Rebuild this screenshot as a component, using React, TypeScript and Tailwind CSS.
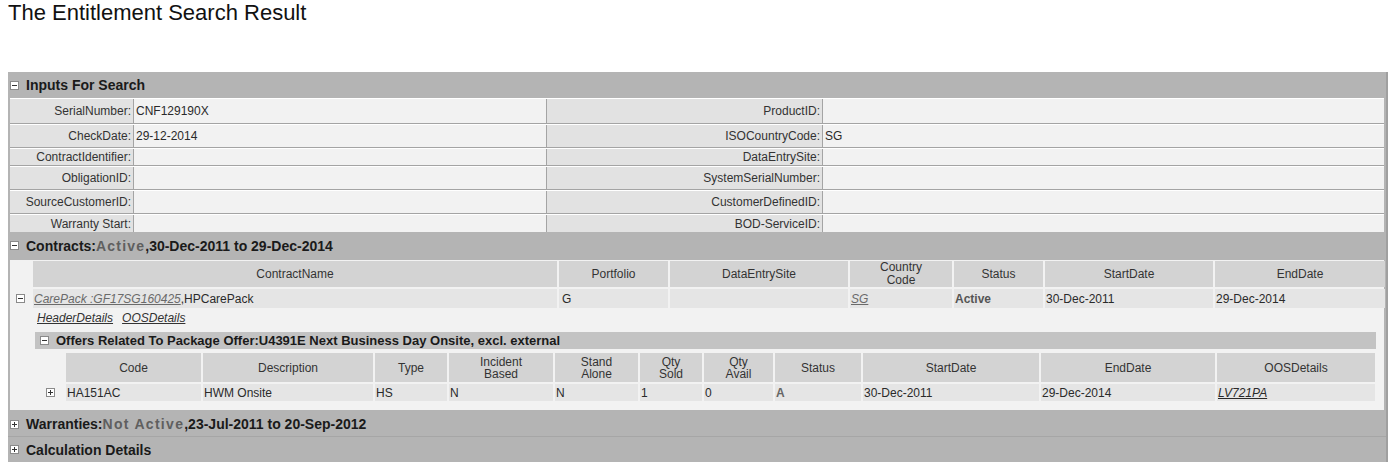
import clsx from "clsx";

const BoxIcon = ({ open }: { open: boolean }) => (
  <svg width="9" height="9" viewBox="0 0 9 9" className="shrink-0">
    <rect x="0.5" y="0.5" width="8" height="8" fill="#fff" stroke="#8a8a8a" />
    <path d="M2 4.5h5" stroke="#333" />
    {!open && <path d="M4.5 2v5" stroke="#333" />}
  </svg>
);

const Bar = ({
  open,
  className,
  children,
}: {
  open: boolean;
  className?: string;
  children: React.ReactNode;
}) => (
  <div
    className={clsx(
      "flex items-center gap-[7px] pl-[2px] text-[14px] leading-[16px] font-bold text-[#1a1a1a]",
      className
    )}
  >
    <BoxIcon open={open} />
    <span>{children}</span>
  </div>
);

const inputs: [string, string, string, string, string][] = [
  ["SerialNumber:", "CNF129190X", "ProductID:", "", "h-[26px]"],
  ["CheckDate:", "29-12-2014", "ISOCountryCode:", "SG", "h-[24px]"],
  ["ContractIdentifier:", "", "DataEntrySite:", "", "h-[18px]"],
  ["ObligationID:", "", "SystemSerialNumber:", "", "h-[24px]"],
  ["SourceCustomerID:", "", "CustomerDefinedID:", "", "h-[24px]"],
  ["Warranty Start:", "", "BOD-ServiceID:", "", "h-[18px]"],
];

const contractCols = [
  "ContractName",
  "Portfolio",
  "DataEntrySite",
  "Country\nCode",
  "Status",
  "StartDate",
  "EndDate",
];

const offerCols = [
  "Code",
  "Description",
  "Type",
  "Incident\nBased",
  "Stand\nAlone",
  "Qty\nSold",
  "Qty\nAvail",
  "Status",
  "StartDate",
  "EndDate",
  "OOSDetails",
];

const offerRow = ["HA151AC", "HWM Onsite", "HS", "N", "N", "1", "0", "A", "30-Dec-2011", "29-Dec-2014"];

export default function App() {
  return (
    <div className="min-h-screen bg-white font-['Liberation_Sans',Arial,sans-serif] text-[12px] leading-[14px] text-[#2a2a2a]">
      <h1 className="pl-2 text-[22px] leading-[26px] text-[#111]">The Entitlement Search Result</h1>

      <div className="ml-2 mt-[46px] w-[1380px] border-r-2 border-[#a0a0a0] bg-[#b4b4b4] pb-[2px]">
        {/* inputs */}
        <Bar open className="h-[26px]">Inputs For Search</Bar>
        <div className="mx-[2px]">
          {inputs.map(([l1, v1, l2, v2, h], i) => (
            <div
              key={i}
              className={clsx(
                "grid grid-cols-[123px_413px_276px_1fr] overflow-hidden border-t border-white",
                i < inputs.length - 1 && "border-b border-b-[#a4a4a4]",
                h
              )}
            >
              <div className="flex items-center justify-end bg-[#e2e2e2] pr-[2px] text-[#333]">{l1}</div>
              <div className="flex items-center border-l border-[#a4a4a4] bg-[#f2f2f2] pl-[2px]">{v1}</div>
              <div className="flex items-center justify-end border-l border-[#a4a4a4] bg-[#e2e2e2] pr-[2px] text-[#333]">
                {l2}
              </div>
              <div className="flex items-center border-l border-[#a4a4a4] bg-[#f2f2f2] pl-[2px]">{v2}</div>
            </div>
          ))}
        </div>

        {/* contracts */}
        <Bar open className="h-[27px]">
          Contracts:<span className="tracking-[1.2px] text-[#5f5f5f]">Active</span>,30-Dec-2011 to 29-Dec-2014
        </Bar>
        <div className="mx-[2px] mt-[1px] bg-[#f2f2f2] pb-[9px] pt-[1px]">
          <div className="grid grid-cols-[21px_524px_109px_178px_102px_89px_168px_170px] gap-x-[2px] gap-y-[2px]">
            <div />
            {contractCols.map((c) => (
              <div
                key={c}
                className="flex h-[26px] items-center justify-center whitespace-pre-line bg-[#d3d3d3] text-center leading-[13px] text-[#333]"
              >
                {c}
              </div>
            ))}
            <div className="flex h-[19px] items-center justify-center">
              <BoxIcon open />
            </div>
            <div className="flex items-center bg-[#e5e5e5] pl-[1px]">
              <span className="italic text-[#6a6a6a] underline">CarePack :GF17SG160425</span>,HPCarePack
            </div>
            <div className="flex items-center bg-[#e5e5e5] pl-[3px]">G</div>
            <div className="bg-[#e5e5e5]" />
            <div className="flex items-center bg-[#e5e5e5] pl-[1px]">
              <span className="italic text-[#6a6a6a] underline">SG</span>
            </div>
            <div className="flex items-center bg-[#e5e5e5] pl-[1px] font-bold text-[#555]">Active</div>
            <div className="flex items-center bg-[#e5e5e5] pl-[1px]">30-Dec-2011</div>
            <div className="flex items-center bg-[#e5e5e5] pl-[1px]">29-Dec-2014</div>
          </div>

          <div className="flex h-[20px] items-center gap-[9px] pl-[27px] italic text-[#333]">
            <span className="underline">HeaderDetails</span>
            <span className="underline">OOSDetails</span>
          </div>

          <div className="ml-[25px] mt-[4px] w-[1341px]">
            <div className="flex h-[17px] items-center gap-[7px] bg-[#c3c3c3] pl-[5px] text-[13px] font-bold text-[#1a1a1a]">
              <BoxIcon open />
              <span>Offers Related To Package Offer:U4391E Next Business Day Onsite, excl. external</span>
            </div>
            <div className="mt-[4px] grid grid-cols-[29px_135px_170px_72px_104px_83px_62px_69px_86px_176px_174px_158px] gap-x-[2px] gap-y-[2px]">
              <div />
              {offerCols.map((c) => (
                <div
                  key={c}
                  className="flex h-[29px] items-center justify-center whitespace-pre-line bg-[#d3d3d3] text-center leading-[12px] text-[#333]"
                >
                  {c}
                </div>
              ))}
              <div className="flex h-[17px] items-center justify-end pr-[9px]">
                <BoxIcon open={false} />
              </div>
              {offerRow.map((v, i) => (
                <div
                  key={i}
                  className={clsx(
                    "flex items-center bg-[#e5e5e5] pl-[1px]",
                    i === 7 && "font-bold text-[#666]"
                  )}
                >
                  {v}
                </div>
              ))}
              <div className="flex items-center bg-[#e5e5e5] pl-[1px]">
                <span className="italic underline">LV721PA</span>
              </div>
            </div>
          </div>
        </div>

        {/* collapsed sections */}
        <Bar open={false} className="mt-[2px] h-[25px] border-b border-[#a6a6a6]">
          Warranties:<span className="tracking-[1.3px] text-[#5f5f5f]">Not Active</span>,23-Jul-2011 to 20-Sep-2012
        </Bar>
        <Bar open={false} className="h-[25px]">
          Calculation Details
        </Bar>
      </div>
    </div>
  );
}
